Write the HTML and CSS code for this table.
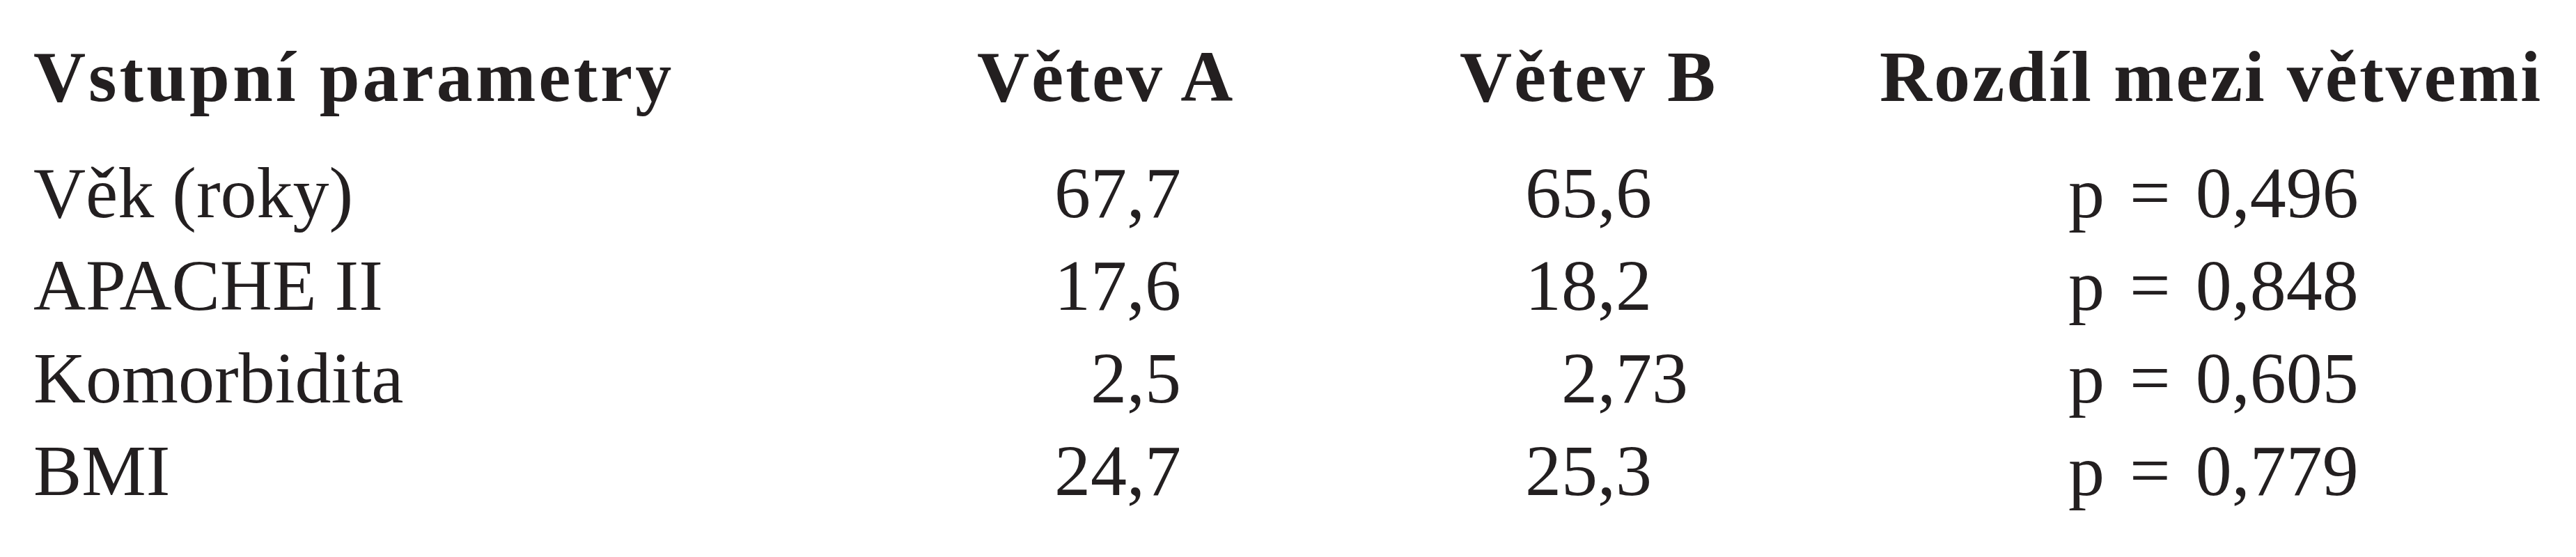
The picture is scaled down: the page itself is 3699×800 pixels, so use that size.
FILE: index.html
```html
<!DOCTYPE html>
<html lang="cs">
<head>
<meta charset="utf-8">
<title>Vstupní parametry</title>
<link rel="stylesheet" href="styles.css">
</head>
<body>
<div class="sheet">
  <div class="grid">
    <div class="cell head head-wide">Vstupní parametry</div>
    <div class="cell head">Větev A</div>
    <div class="cell head">Větev B</div>
    <div class="cell head">Rozdíl mezi větvemi</div>

    <div class="cell label">Věk (roky)</div>
    <div class="cell num col-a"><span class="int">67</span>,7</div>
    <div class="cell num col-b"><span class="int">65</span>,6</div>
    <div class="cell pval">p = 0,496</div>

    <div class="cell label">APACHE II</div>
    <div class="cell num col-a"><span class="int">17</span>,6</div>
    <div class="cell num col-b"><span class="int">18</span>,2</div>
    <div class="cell pval">p = 0,848</div>

    <div class="cell label">Komorbidita</div>
    <div class="cell num col-a"><span class="int">2</span>,5</div>
    <div class="cell num col-b"><span class="int">2</span>,73</div>
    <div class="cell pval">p = 0,605</div>

    <div class="cell label">BMI</div>
    <div class="cell num col-a"><span class="int">24</span>,7</div>
    <div class="cell num col-b"><span class="int">25</span>,3</div>
    <div class="cell pval">p = 0,779</div>
  </div>
</div>
</body>
</html>
```

FILE: styles.css
```css
html, body {
  margin: 0;
  padding: 0;
  background: #ffffff;
}

.sheet {
  padding: 43px 0 0 48px;
  font-family: "Liberation Serif", "Times New Roman", serif;
  font-size: 104px;
  color: #231f20;
}

.grid {
  display: grid;
  grid-template-columns: 1355px 693px 603px 1fr;
  line-height: 133px;
}

.cell {
  white-space: nowrap;
}

.head {
  font-weight: bold;
  letter-spacing: 3px;
  padding-bottom: 34px;
}

.head-wide {
  letter-spacing: 4px;
}

.num .int {
  display: inline-block;
  text-align: right;
}

.col-a .int {
  width: 215px;
}

.col-b .int {
  width: 198px;
}

.pval {
  padding-left: 271px;
  word-spacing: 10px;
}
```
